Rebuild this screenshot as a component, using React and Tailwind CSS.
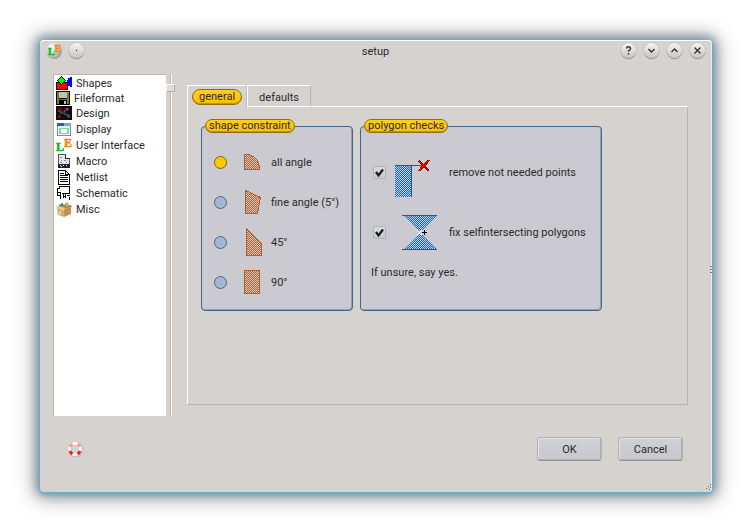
import React, { useState } from "react";

const ShapesIcon = () => (
  <svg width="16" height="14" viewBox="0 0 16 14" shapeRendering="crispEdges">
    <rect x="0.5" y="6.5" width="11" height="7" fill="#ff0000" stroke="#000" />
    <path d="M16 1h-2v1h-2v2h-1v4h1v2h2v1h2z" fill="#0000ff" />
    <path d="M5.5 0.5L9.5 4.5L5.5 8.5L1.5 4.5Z" fill="#00ff00" stroke="#000" />
  </svg>
);

const FloppyIcon = () => (
  <svg width="14" height="14" viewBox="0 0 14 14" shapeRendering="crispEdges">
    <rect width="14" height="14" fill="#000" />
    <rect x="1" y="1" width="12" height="12" fill="#808000" />
    <rect x="3" y="0" width="8" height="8" fill="#000" />
    <rect x="3" y="1" width="8" height="6" fill="#c0c0c0" />
    <rect x="12" y="1" width="1" height="1" fill="#c0c0c0" />
    <rect x="3" y="9" width="8" height="5" fill="#000" />
    <rect x="8" y="10" width="2" height="3" fill="#c0c0c0" />
  </svg>
);

const DesignIcon = () => (
  <svg width="16" height="14" viewBox="0 0 16 14" shapeRendering="crispEdges">
    <rect width="16" height="14" fill="#140a10" />
    <path d="M2 2h4v2h3v4h-3v-2h-4zM2 9h3v3h-3z" fill="#5a1418" />
    <path d="M9 2h4v3h-3v3h4v4h-3v-3h-3v-4h1z" fill="#2c2c66" />
    <path d="M10 2h2v2h-2zM8 4h1v2h-1zM12 9h1v2h-1zM4 5h1v3h-1z" fill="#b03a2a" />
    <path d="M2 5L14 11" stroke="#127a28" />
  </svg>
);

const DisplayIcon = () => (
  <svg width="14" height="13" viewBox="0 0 14 13" shapeRendering="crispEdges">
    <rect x="0.5" y="0.5" width="13" height="12" fill="#eef2f8" stroke="#7c8ca8" />
    <rect x="0" y="0" width="11" height="3" fill="#2458d8" />
    <rect x="7" y="0" width="7" height="3" fill="#7ba2ee" />
    <rect x="3" y="5.5" width="8" height="5" fill="#fff" stroke="#7fdc94" strokeWidth="1.4" />
  </svg>
);

const LogoIcon = ({ size = 16 }) => (
  <svg
    width={size}
    height={size}
    viewBox="0 0 16 16"
    className="overflow-visible"
    fontFamily="Liberation Serif, serif"
    fontWeight="700"
  >
    <text x="8" y="10" fontSize="12" fill="#f08a10" stroke="#f08a10" strokeWidth="0.6">E</text>
    <text x="0" y="14" fontSize="12" fill="#12b428" stroke="#12b428" strokeWidth="0.6">L</text>
  </svg>
);

const MacroIcon = () => (
  <svg width="12" height="14" viewBox="0 0 12 14" shapeRendering="crispEdges">
    <path d="M0.5 0.5h7l4 4v9h-11z" fill="#e4e8f0" stroke="#555" />
    <path d="M7.5 0.5v4h4" fill="#fff" stroke="#222" />
    <path d="M2 3h2v1h-2zM3 6h1v1h-1zM6 6h2v1h-2zM2 8h2v1h-2zM8 8h1v1h-1z" fill="#8890a4" />
    <rect x="0" y="10" width="12" height="4" fill="#222" />
    <path d="M2 11h1v1h-1zM5 11h1v1h-1zM8 11h1v1h-1zM3 12h1v1h-1z" fill="#fff" />
  </svg>
);

const NetlistIcon = () => (
  <svg width="12" height="15" viewBox="0 0 12 15" shapeRendering="crispEdges">
    <path d="M0.5 0.5h7l4 4v10h-11z" fill="#fff" stroke="#000" />
    <path d="M7.5 0.5v4h4" fill="none" stroke="#000" />
    <path d="M2 3h4v1h-4zM2 5h8v1h-8zM2 7h8v1h-8zM2 9h8v1h-8zM2 11h8v1h-8z" fill="#000" />
  </svg>
);

const SchematicIcon = () => (
  <svg width="14" height="14" viewBox="0 0 14 14" shapeRendering="crispEdges" fill="none" stroke="#000">
    <path d="M2.5 2.5v-2h10v7h-8M2.5 2.5h-2v4h3v6" />
    <path d="M0.5 7v2.5h3M6.5 8v4M6.5 10.5h2M8.5 8v4M9.5 9.5h3M11.5 11.5h1v2" />
  </svg>
);

const MiscIcon = () => (
  <svg width="16" height="15" viewBox="0 0 16 15">
    <path d="M3 3l3-2 2 2 3-3 2 3v3H3z" fill="#5c94a8" />
    <path d="M5 2l2-1v3H5z" fill="#3c9840" />
    <path d="M10 1l2 1v2h-2z" fill="#e6cf40" />
    <path d="M0 5l7-1 8-1 1 2-8 2z" fill="#b98a48" />
    <path d="M1 6l7 1v8l-6-2z" fill="#d8ab68" />
    <path d="M8 7l7-2v7l-7 3z" fill="#c4904c" />
    <path d="M0 5l2-1 7 2-2 3z" fill="#ecc98c" />
    <path d="M3 9l2 1v3l-2-1z" fill="#efd6a8" />
  </svg>
);

const pages = [
  { name: "Shapes", icon: <ShapesIcon />, row: "h-[15px]" },
  { name: "Fileformat", icon: <FloppyIcon />, row: "h-[15px]", narrow: true },
  { name: "Design", icon: <DesignIcon />, row: "h-4" },
  { name: "Display", icon: <DisplayIcon />, row: "h-4" },
  { name: "User Interface", icon: <LogoIcon />, row: "h-4" },
  { name: "Macro", icon: <MacroIcon />, row: "h-4" },
  { name: "Netlist", icon: <NetlistIcon />, row: "h-4" },
  { name: "Schematic", icon: <SchematicIcon />, row: "h-4" },
  { name: "Misc", icon: <MiscIcon />, row: "h-4" },
];

// dotted fills shared by the shape previews
const Hatches = () => (
  <svg width="0" height="0" className="absolute">
    <defs>
      <pattern id="hatch-orange" width="2" height="2" patternUnits="userSpaceOnUse">
        <path d="M0 0h1v1h-1zM1 1h1v1h-1z" fill="#b0602c" shapeRendering="crispEdges" />
        <path d="M1 0h1v1h-1zM0 1h1v1h-1z" fill="#d2cac6" shapeRendering="crispEdges" />
      </pattern>
      <pattern id="hatch-blue" width="2" height="2" patternUnits="userSpaceOnUse">
        <path d="M0 0h1v1h-1zM1 1h1v1h-1z" fill="#1462c4" shapeRendering="crispEdges" />
        <path d="M1 0h1v1h-1zM0 1h1v1h-1z" fill="#c6d2e2" shapeRendering="crispEdges" />
      </pattern>
    </defs>
  </svg>
);

const constraints = [
  { id: "all", label: "all angle", d: "M1.5 6.5h4q11 3 11 15h-15z" },
  { id: "fine", label: "fine angle (5°)", d: "M2.5 2.5l15 7l-3 16h-12z" },
  { id: "45", label: "45°", d: "M3.5 0.5l15 15v12h-15z" },
  { id: "90", label: "90°", d: "M1.5 2.5h15v23h-15z" },
];

const RemovePointsIcon = () => (
  <svg width="45" height="50" viewBox="0 0 45 50" shapeRendering="crispEdges">
    <rect x="1" y="18" width="16" height="32" fill="url(#hatch-blue)" />
    <path d="M1 18.5h27M17.5 18v32" stroke="#1458b8" fill="none" />
    <path d="M25 14l10 10M35 13l-10 11" stroke="#8c0000" strokeWidth="2.6" />
    <path d="M25 14l10 10M35 13l-10 11" stroke="#e00808" strokeWidth="1.4" />
  </svg>
);

const FixPolygonIcon = () => (
  <svg width="45" height="50" viewBox="0 0 45 50" shapeRendering="crispEdges">
    <path d="M8 8h35L25.5 25.5zM8 43h35L25.5 25.5z" fill="url(#hatch-blue)" />
    <path d="M8 8.5h35M8 42.5h35" stroke="#1458b8" />
    <path d="M23 23l5 5M28 23l-5 5" stroke="#fff" strokeWidth="1" />
    <path d="M28 25.5h5M30.5 23v5" stroke="#000" />
  </svg>
);

const RoundButton = ({ label, children }) => (
  <button
    type="button"
    aria-label={label}
    className="flex size-[15px] items-center justify-center rounded-full bg-linear-to-b from-[#f6f5f4] to-[#c9c5c2] shadow-[0_1px_1px_#8c8886,0_0_1px_#8c8886]"
  >
    <svg width="9" height="9" viewBox="0 0 9 9" fill="none" stroke="#333" strokeWidth="1.4">
      {children}
    </svg>
  </button>
);

const GroupBox = ({ title, className, children }) => (
  <fieldset
    className={`rounded-[4px] border border-[#446789] bg-[#cacad0] pt-[9px] pb-2 shadow-[inset_-1px_-1px_0_#8ea3ba] ${className}`}
  >
    <legend className="ml-[3px] h-[14px] rounded-full border border-[#8f6d0c] bg-linear-to-b from-[#ffd01c] to-[#fbbf00] px-[3px] leading-[12px] shadow-[inset_0_-1px_0_#c89400]">
      {title}
    </legend>
    {children}
  </fieldset>
);

const CheckRow = ({ id, label, icon }) => {
  const [checked, setChecked] = useState(true);
  return (
    <div className="flex h-[60px] items-center pl-3">
      <span className="relative flex">
        <input
          id={id}
          type="checkbox"
          checked={checked}
          onChange={(e) => setChecked(e.target.checked)}
          className="size-[13px] appearance-none rounded-[2px] border border-[#aeb1b6] bg-linear-to-b from-[#d9dadd] to-[#c6c8cd]"
        />
        {checked && (
          <svg width="13" height="13" viewBox="0 0 13 13" className="pointer-events-none absolute inset-0">
            <path d="M3 6l2.5 3.5L10 3.5" fill="none" stroke="#1c1c1c" strokeWidth="2.2" />
          </svg>
        )}
      </span>
      <label htmlFor={id} className="flex items-center gap-[10px] pl-2 whitespace-nowrap">
        {icon}
        <span className="pt-0.5">{label}</span>
      </label>
    </div>
  );
};

const LifeRing = () => (
  <svg width="18" height="18" viewBox="0 0 18 18" fill="none">
    <circle cx="9.5" cy="9.5" r="6" stroke="#c4bfbc" strokeWidth="4" />
    <circle cx="9" cy="9" r="5.5" stroke="#fff" strokeWidth="2.8" />
    <path d="M3.9 7a5.5 5.5 0 0 1 2.6-3M11.5 4a5.5 5.5 0 0 1 2.6 3" stroke="#f79a94" strokeWidth="2.8" />
    <path d="M3.9 11a5.5 5.5 0 0 0 2.6 3M11.5 14a5.5 5.5 0 0 0 2.6-3" stroke="#ec1c14" strokeWidth="2.8" />
  </svg>
);

const dialogButton =
  "h-6 w-[65px] rounded-[3px] border border-[#b2b1b2] border-b-[#969596] bg-linear-to-b from-[#cfd0d4] to-[#c8c9ce] pt-0.5 shadow-[inset_1px_1px_0_#e2e2e4,inset_-1px_-1px_0_#b0b0b4]";

const App = () => {
  const [page, setPage] = useState("");
  const [tab, setTab] = useState("general");
  const [constraint, setConstraint] = useState("all");

  return (
    <div className="flex min-h-screen flex-col bg-white p-10 font-['Roboto','Noto_Sans',sans-serif] text-[11px] leading-4 text-[#2a2a2a]">
      <Hatches />
      <div className="relative flex flex-1 flex-col rounded-[4px] bg-[#d6d2cf] shadow-[inset_0_1px_0_#fff,inset_-1px_0_0_#f0eeed,0_1px_2px_1px_#6caccb,0_0_10px_3px_#6080a0b0,0_1px_20px_5px_#50505090]">
        {/* Title bar */}
        <div className="flex h-[21px] items-center justify-between pr-[7px] pl-1.5">
          <div className="flex flex-1 items-center gap-[7px]">
            <span className="flex size-4 items-center justify-center rounded-full bg-radial-[at_35%_25%] from-white via-[#c4c4c4] to-[#757575]">
              <LogoIcon size={13} />
            </span>
            <RoundButton label="Window menu">
              <circle cx="4.5" cy="4.5" r="0.7" fill="#333" stroke="none" />
            </RoundButton>
          </div>
          <h1 className="pt-0.5">setup</h1>
          <div className="flex flex-1 justify-end gap-2">
            <RoundButton label="Help">
              <path d="M2.5 2.5q0-1.8 2-1.8t2 1.8q0 1-2 2.3v1M4.5 7v1.5" />
            </RoundButton>
            <RoundButton label="Minimize">
              <path d="M1.5 3l3 3l3-3" />
            </RoundButton>
            <RoundButton label="Maximize">
              <path d="M1.5 6l3-3l3 3" />
            </RoundButton>
            <RoundButton label="Close">
              <path d="M1.5 1.5l6 6M7.5 1.5l-6 6" />
            </RoundButton>
          </div>
        </div>

        <div className="flex flex-1 pt-[13px] pr-6 pl-[13px]">
          <ul className="w-[113px] shrink-0 border-t border-l border-[#b9b5b2] bg-white">
            {pages.map((p) => (
              <li key={p.name}>
                <button
                  type="button"
                  aria-current={page === p.name}
                  onClick={() => setPage(p.name)}
                  className={`flex w-full items-center gap-1 pl-0.5 text-left whitespace-nowrap ${p.row}`}
                >
                  <span className={`flex shrink-0 justify-center ${p.narrow ? "w-[14px]" : "w-4"}`}>
                    {p.icon}
                  </span>
                  <span className="pt-0.5">{p.name}</span>
                </button>
              </li>
            ))}
          </ul>
          <div role="separator" aria-orientation="vertical" className="relative flex w-[9px] justify-center">
            <span className="w-0.5 border-r border-l border-r-white border-l-[#b9b5b2]" />
            <span className="absolute inset-x-0 top-[10px] h-2 border border-[#b5b1ae] border-t-white border-l-white bg-[#dedbd8]" />
          </div>

          {/* Tabs */}
          <div className="mt-[11px] mb-[11px] ml-3 flex min-w-0 flex-1 flex-col">
            <div role="tablist" className="flex h-[22px]">
              {["general", "defaults"].map((t) => (
                <button
                  key={t}
                  type="button"
                  role="tab"
                  aria-selected={tab === t}
                  onClick={() => setTab(t)}
                  className={
                    tab === t
                      ? "flex items-center border-t border-r border-l border-white border-r-[#c0bcb9] px-1"
                      : "flex items-center border border-white border-r-[#b9b5b2] px-[6px] pt-[3px]"
                  }
                >
                  <span
                    className={
                      tab === t
                        ? "h-4 rounded-full border border-[#8f6d0c] bg-linear-to-b from-[#ffd01c] to-[#fbbf00] px-[6px] leading-[14px] shadow-[inset_0_-1px_0_#c89400]"
                        : "px-[5px]"
                    }
                  >
                    {t}
                  </span>
                </button>
              ))}
              <span className="flex-1 border-b border-white" />
            </div>

            <div
              role="tabpanel"
              className="flex-1 border-r border-b border-l border-[#b9b5b2] border-l-white pt-3 pl-[13px]"
            >
              {tab === "general" && (
                <div className="flex gap-[7px]">
                  <GroupBox title="shape constraint" className="w-[152px]">
                    {constraints.map((c) => (
                      <div key={c.id} className="flex h-10 items-center pl-3">
                        <input
                          id={`constraint-${c.id}`}
                          type="radio"
                          name="constraint"
                          checked={constraint === c.id}
                          onChange={() => setConstraint(c.id)}
                          className="size-[13px] appearance-none rounded-full border border-[#446789] bg-[#a5b6d0] checked:border-[#80620c] checked:bg-[#ffc800]"
                        />
                        <label
                          htmlFor={`constraint-${c.id}`}
                          className="flex items-center gap-2 pl-4 whitespace-nowrap"
                        >
                          <svg width="20" height="28" viewBox="0 0 20 28" shapeRendering="crispEdges">
                            <path d={c.d} fill="url(#hatch-orange)" stroke="#b0602c" />
                          </svg>
                          <span className="pt-0.5">{c.label}</span>
                        </label>
                      </div>
                    ))}
                  </GroupBox>
                  <GroupBox title="polygon checks" className="w-[242px]">
                    <CheckRow id="remove-points" label="remove not needed points" icon={<RemovePointsIcon />} />
                    <CheckRow id="fix-polygons" label="fix selfintersecting polygons" icon={<FixPolygonIcon />} />
                    <p className="pt-[3px] pl-[10px]">If unsure, say yes.</p>
                  </GroupBox>
                </div>
              )}
            </div>
          </div>
        </div>

        <div className="flex items-center justify-between pt-[21px] pr-[29px] pb-[31px] pl-[26px]">
          <button type="button" aria-label="Help contents">
            <LifeRing />
          </button>
          <div className="flex gap-4">
            <button type="button" className={dialogButton}>
              OK
            </button>
            <button type="button" className={dialogButton}>
              Cancel
            </button>
          </div>
        </div>

        {/* Resize grips */}
        <svg width="2" height="9" viewBox="0 0 2 9" className="absolute top-1/2 right-0" fill="#807c7a">
          <path d="M0 0h2v1h-2zM0 3h2v1h-2zM0 6h2v1h-2z" />
        </svg>
        <svg width="6" height="6" viewBox="0 0 6 6" className="absolute right-0 bottom-0.5" fill="#6f6b69">
          <path d="M4 0h1v1h-1zM2 2h1v1h-1zM4 3h1v1h-1zM0 4h1v1h-1zM3 5h1v1h-1z" />
        </svg>
      </div>
    </div>
  );
};

export default App;
